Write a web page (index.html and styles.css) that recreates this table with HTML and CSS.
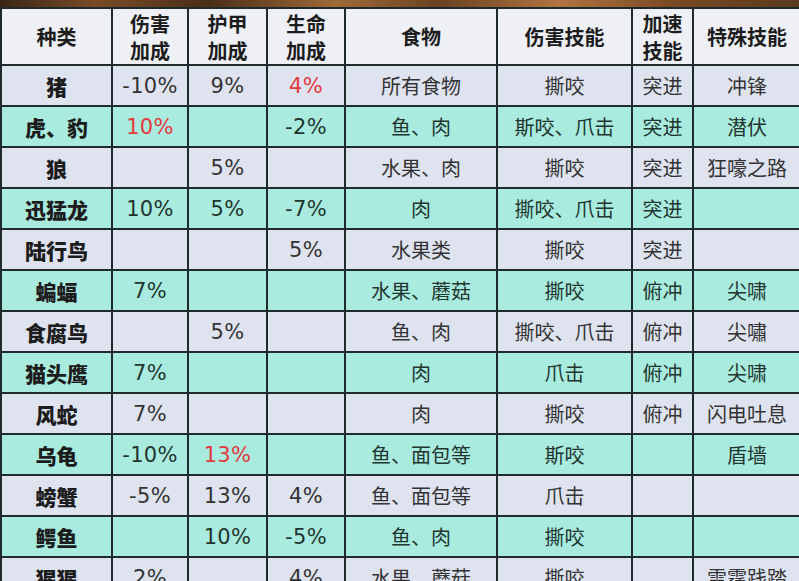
FILE: index.html
```html
<!DOCTYPE html>
<html lang="zh">
<head>
<meta charset="utf-8">
<title>种类</title>
<link rel="stylesheet" href="styles.css">
</head>
<body>
<div class="page">
  <div class="banner"></div>
  <table class="grid">
    <colgroup>
      <col class="c-kind"><col class="c-dmg"><col class="c-arm"><col class="c-life">
      <col class="c-food"><col class="c-skill"><col class="c-speed"><col class="c-special">
    </colgroup>
    <thead>
      <tr class="head">
        <th>种类</th><th>伤害<br>加成</th><th>护甲<br>加成</th><th>生命<br>加成</th>
        <th>食物</th><th>伤害技能</th><th>加速<br>技能</th><th>特殊技能</th>
      </tr>
    </thead>
    <tbody>
      <tr class="light"><th>猪</th><td class="num">-10%</td><td class="num">9%</td><td class="num red">4%</td><td>所有食物</td><td>撕咬</td><td>突进</td><td>冲锋</td></tr>
      <tr class="teal"><th>虎、豹</th><td class="num red">10%</td><td></td><td class="num">-2%</td><td>鱼、肉</td><td>斯咬、爪击</td><td>突进</td><td>潜伏</td></tr>
      <tr class="light"><th>狼</th><td></td><td class="num">5%</td><td></td><td>水果、肉</td><td>撕咬</td><td>突进</td><td>狂嚎之路</td></tr>
      <tr class="teal"><th>迅猛龙</th><td class="num">10%</td><td class="num">5%</td><td class="num">-7%</td><td>肉</td><td>撕咬、爪击</td><td>突进</td><td></td></tr>
      <tr class="light"><th>陆行鸟</th><td></td><td></td><td class="num">5%</td><td>水果类</td><td>撕咬</td><td>突进</td><td></td></tr>
      <tr class="teal"><th>蝙蝠</th><td class="num">7%</td><td></td><td></td><td>水果、蘑菇</td><td>撕咬</td><td>俯冲</td><td>尖啸</td></tr>
      <tr class="light"><th>食腐鸟</th><td></td><td class="num">5%</td><td></td><td>鱼、肉</td><td>撕咬、爪击</td><td>俯冲</td><td>尖嘯</td></tr>
      <tr class="teal"><th>猫头鹰</th><td class="num">7%</td><td></td><td></td><td>肉</td><td>爪击</td><td>俯冲</td><td>尖啸</td></tr>
      <tr class="light"><th>风蛇</th><td class="num">7%</td><td></td><td></td><td>肉</td><td>撕咬</td><td>俯冲</td><td>闪电吐息</td></tr>
      <tr class="teal"><th>乌龟</th><td class="num">-10%</td><td class="num red">13%</td><td></td><td>鱼、面包等</td><td>斯咬</td><td></td><td>盾墙</td></tr>
      <tr class="light"><th>螃蟹</th><td class="num">-5%</td><td class="num">13%</td><td class="num">4%</td><td>鱼、面包等</td><td>爪击</td><td></td><td></td></tr>
      <tr class="teal"><th>鳄鱼</th><td></td><td class="num">10%</td><td class="num">-5%</td><td>鱼、肉</td><td>撕咬</td><td></td><td></td></tr>
      <tr class="light"><th>猩猩</th><td class="num">2%</td><td></td><td class="num">4%</td><td>水果、蘑菇</td><td>撕咬</td><td></td><td>雷霆践踏</td></tr>
    </tbody>
  </table>
</div>
</body>
</html>
```

FILE: styles.css
```css
html, body {
  margin: 0;
  padding: 0;
  background: #dfe3f0;
  overflow: hidden;
}

.page {
  width: 799px;
  height: 581px;
  overflow: hidden;
  background: #dfe3f0;
}

.banner {
  height: 7px;
  background: linear-gradient(90deg, #3a2616 0%, #7a4c28 12%, #4a2e18 26%, #a06a38 42%, #6a4222 55%, #b07440 70%, #7a4a24 84%, #5a3a1e 100%);
}

.grid {
  border-collapse: collapse;
  table-layout: fixed;
  width: 800px;
  font-family: "Noto Sans CJK SC", sans-serif;
  font-size: 20px;
  color: #333333;
}

.c-kind { width: 111px; }
.c-dmg { width: 76px; }
.c-arm { width: 79px; }
.c-life { width: 78px; }
.c-food { width: 152px; }
.c-skill { width: 135px; }
.c-speed { width: 61px; }
.c-special { width: 108px; }

.grid th,
.grid td {
  border: 2px solid #1f2a2a;
  padding: 0;
  text-align: center;
  vertical-align: middle;
  white-space: nowrap;
  overflow: hidden;
}

.grid th {
  font-family: "Noto Sans CJK SC", sans-serif;
  font-weight: 700;
  color: #1c1c1c;
}

.head th {
  height: 55px;
  line-height: 27px;
  background: #eef0f5;
  font-weight: 700;
  font-size: 20px;
}

.grid tbody tr {
  height: 41px;
}

.grid tbody td,
.grid tbody th {
  height: 39px;
  line-height: 26px;
}

.grid tbody th {
  font-weight: 900;
  font-size: 21px;
}

.grid td.num {
  font-family: "DejaVu Sans", "Noto Sans", sans-serif;
  font-size: 21px;
  letter-spacing: 0.3px;
}

.light { background: #dfe3f0; }
.teal { background: #a9ebdf; }

.teal td { color: #22362f; }

.grid td.red { color: #e2393d; }
```
